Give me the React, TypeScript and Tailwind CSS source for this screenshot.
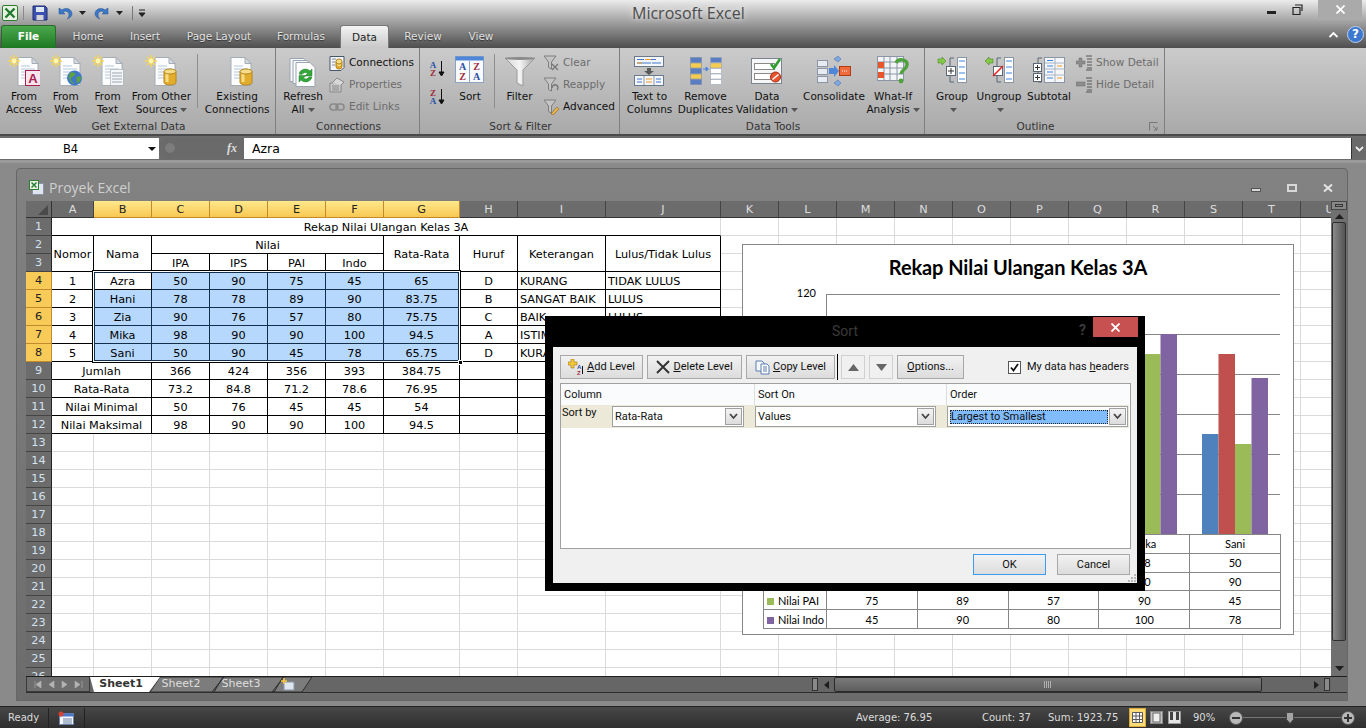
import React from 'react';

const Caret = ({ c = '#555' }: { c?: string }) => (
  <svg width="7" height="4" className="inline-block ml-[3px] align-middle">
    <path d="M0 0h7L3.5 4z" fill={c} />
  </svg>
);

// shared pieces of the ribbon icons
const Page = ({ lines = true }: { lines?: boolean }) => (
  <>
    <path d="M10 2.5h14l6 6v22H10z" fill="#fdfdfd" stroke="#a4acb4" />
    <path d="M24 2.5v6h6z" fill="#d5dbe2" stroke="#a4acb4" />
    {lines && <path d="M13 11h9M13 14h14M13 17h14M13 20h14M13 23h14" stroke="#b4c8dc" />}
  </>
);
const Spark = () => (
  <g>
    <path d="M6 0v12M0 6h12M2 2l8 8M10 2l-8 8" stroke="#f9d648" strokeWidth="1.4" />
    <circle cx="6" cy="6" r="2.4" fill="#fff6b0" />
  </g>
);
const Db = ({ x, y, w = 12, h = 15 }: { x: number; y: number; w?: number; h?: number }) => (
  <g transform={`translate(${x} ${y})`}>
    <path d={`M0 2.5v${h - 4}a${w / 2} 2.5 0 0 0 ${w} 0v-${h - 4}z`} fill="#e2ad2c" stroke="#b4851c" />
    <rect x="1.5" y="3" width="3" height={h - 5} fill="#f7dc84" />
    <ellipse cx={w / 2} cy="2.5" rx={w / 2} ry="2.5" fill="#f6dd8a" stroke="#b4851c" />
  </g>
);
const Ico = ({ children, w = 32, h = 32 }: { children: React.ReactNode; w?: number; h?: number }) => (
  <svg width={w} height={h} viewBox={`0 0 ${w} ${h}`}>
    {children}
  </svg>
);

const FromAccess = () => (
  <Ico>
    <Page />
    <Spark />
    <rect x="17.5" y="15.5" width="15" height="15" fill="#f8e4ec" stroke="#a81e50" />
    <text x="25" y="27.5" textAnchor="middle" fontSize="13" fontWeight="700" fill="#a81e50" fontFamily="Liberation Sans, sans-serif">A</text>
  </Ico>
);
const FromWeb = () => (
  <Ico>
    <Page />
    <Spark />
    <circle cx="24.5" cy="23" r="7.5" fill="#3f78c8" />
    <path d="M20 18c3-2 6 0 5 2s-4 1-4 4 3 3 3 5c-3 0-7-6-4-11zM27 22c2-1 4-1 4 1s-2 4-3 5-2-4-1-6z" fill="#5ea23c" />
  </Ico>
);
const FromText = () => (
  <Ico>
    <Page />
    <Spark />
    <rect x="18.5" y="14.5" width="13" height="16" fill="#f4f6f8" stroke="#8e98a4" strokeDasharray="1 1" />
    <path d="M20 18h10M20 21h10M20 24h10M20 27h10" stroke="#9aa6b2" />
  </Ico>
);
const FromOther = () => (
  <Ico>
    <Page />
    <Spark />
    <Db x={19} y={14} />
  </Ico>
);
const Existing = () => (
  <Ico>
    <Page />
    <Db x={19} y={14} />
  </Ico>
);
const Refresh = () => (
  <Ico>
    <path d="M3 3.5h14l4 4v19H3z" fill="#f6f8fa" stroke="#9aa4b0" />
    <path d="M6 5.5h14l4 4v19H6z" fill="#f8fafc" stroke="#9aa4b0" />
    <path d="M9 7.5h14l5 5v19H9z" fill="#fff" stroke="#9aa4b0" />
    <path d="M12 19a6.5 6.5 0 0 1 11-3l2-2v7h-7l2.500-2.500a3.500 3.500 0 0 0-5.500 1z" fill="#35a83c" stroke="#1f7a28" strokeWidth=".5" />
    <path d="M25 22a6.500 6.500 0 0 1-11 3l-2 2v-6.500h7l-2.500 2.500a3.500 3.500 0 0 0 5.500-1z" fill="#35a83c" stroke="#1f7a28" strokeWidth=".5" />
  </Ico>
);
const ConnIco = () => (
  <Ico w={16} h={16}>
    <path d="M1 1.500h14v11l-3 3H1z" fill="#f4f6fa" stroke="#48566a" />
    <path d="M3 4h4M3 7h3M3 10h3" stroke="#7a8ca0" />
    <Db x={7} y={4} w={6} h={9} />
  </Ico>
);
const PropIco = () => (
  <Ico w={16} h={16}>
    <path d="M1 6h11v9H1z" fill="#c8c8c8" stroke="#888" />
    <path d="M3 6l5-5 7 4-3 3" fill="#d8d8d8" stroke="#888" />
    <path d="M3 9h7M3 11h7M3 13h7" stroke="#8a8a8a" />
  </Ico>
);
const LinkIco = () => (
  <Ico w={16} h={16}>
    <rect x="1" y="5" width="8" height="6" rx="3" fill="none" stroke="#8a8a8a" strokeWidth="1.6" />
    <rect x="7" y="5" width="8" height="6" rx="3" fill="none" stroke="#8a8a8a" strokeWidth="1.6" />
  </Ico>
);
const AzIco = ({ top, bot }: { top: string; bot: string }) => {
  const col = (s: string) => (s === 'A' ? '#2a50a8' : '#a02c3c');
  return (
    <Ico w={18} h={18}>
      <text x="5" y="8" textAnchor="middle" fontSize="9" fontWeight="700" fill={col(top)} fontFamily="Liberation Serif, serif">{top}</text>
      <text x="5" y="16" textAnchor="middle" fontSize="9" fontWeight="700" fill={col(bot)} fontFamily="Liberation Serif, serif">{bot}</text>
      <path d="M13.500 1v14M11 12l2.500 4 2.500-4z" stroke="#111" fill="#111" />
    </Ico>
  );
};
const SortBig = () => (
  <Ico>
    <rect x="1.500" y="1.500" width="28" height="26" fill="#f8fafd" stroke="#8ca2c0" />
    <rect x="1.500" y="1.500" width="28" height="4" fill="#4f86d8" />
    <path d="M15.500 6v21" stroke="#8ca2c0" />
    <g fontSize="10" fontWeight="700" fontFamily="Liberation Serif, serif" textAnchor="middle">
      <text x="8.500" y="15" fill="#2a50a8">A</text>
      <text x="8.500" y="25" fill="#a02c3c">Z</text>
      <text x="22.500" y="15" fill="#a02c3c">Z</text>
      <text x="22.500" y="25" fill="#2a50a8">A</text>
    </g>
  </Ico>
);
const Funnel = () => (
  <Ico>
    <defs>
      <linearGradient id="fun" x1="0" x2="1" y1="0" y2="0">
        <stop offset="0" stopColor="#d8d8d8" />
        <stop offset=".5" stopColor="#f4f4f4" />
        <stop offset="1" stopColor="#a4a4a4" />
      </linearGradient>
    </defs>
    <path d="M1 3h30L19 15v16l-6-3V15z" fill="url(#fun)" stroke="#9a9a9a" />
    <ellipse cx="16" cy="3.500" rx="15" ry="1.500" fill="#8a8a8a" />
  </Ico>
);
const MiniFunnel = ({ children }: { children?: React.ReactNode }) => (
  <Ico w={16} h={16}>
    <path d="M1 1h12L8.500 7v7l-3-1.500V7z" fill="#c4c4c4" stroke="#7e7e7e" />
    {children}
  </Ico>
);
const TextCols = () => (
  <Ico w={32} h={32}>
    <rect x=".5" y="1.500" width="29" height="10" fill="#f4f6fa" stroke="#6a7a8c" />
    <path d="M3 4.500h7M11 4.500h11M3 8h14M18 8h9" stroke="#3f78d0" />
    <path d="M11 4.500h6M3 8h5" stroke="#ef9a20" />
    <path d="M13 13h4v3h3l-5 4-5-4h3z" fill="#5a5a5a" />
    <rect x=".5" y="20.500" width="29" height="10" fill="#f4f6fa" stroke="#6a7a8c" />
    <path d="M10 21v9M20 21v9" stroke="#8a9aac" />
    <path d="M3 24h5M3 27h5M22 24h5M22 27h5" stroke="#3f78d0" />
    <path d="M12 24h6M12 27h6" stroke="#ef9a20" />
  </Ico>
);
const RemoveDup = () => {
  const fills = ['#5a7cc0', '#f6cc50', '#5a7cc0', '#f6cc50', '#5a7cc0'];
  return (
    <Ico>
      {fills.map((f, i) => (
        <rect key={i} x=".5" y={2.500 + i * 5.500} width="11" height="5" fill={f} stroke="#7a8aa8" strokeWidth=".6" />
      ))}
      {['#5a7cc0', '#f6cc50', '#fff', '#fff', '#fff'].map((f, i) => (
        <rect key={i} x="20.500" y={2.500 + i * 5.500} width="11" height="5" fill={f} stroke="#9aa6b8" strokeWidth=".6" />
      ))}
      <path d="M13 14h4M16 12l2.500 2-2.500 2z" stroke="#4f86d8" fill="#4f86d8" />
    </Ico>
  );
};
const Validation = () => (
  <Ico>
    <rect x=".5" y="3.500" width="30" height="25" fill="#f4f6f8" stroke="#7c8490" />
    <rect x="3.500" y="8.500" width="20" height="6" fill="#fff" stroke="#8a8a8a" />
    <rect x="3.500" y="18.500" width="20" height="6" fill="#fff" stroke="#8a8a8a" />
    <path d="M20 9l3 4 6-9" fill="none" stroke="#2f9e2f" strokeWidth="2.600" />
    <circle cx="24.500" cy="22" r="5" fill="#e8542c" stroke="#a82c10" />
    <path d="M21.500 24.500l6-5" stroke="#fff" strokeWidth="1.600" />
  </Ico>
);
const Consol = () => (
  <Ico w={34} h={32}>
    <g fill="#e8ecf2" stroke="#8a96a6">
      <rect x=".5" y="5.500" width="10" height="6" />
      <rect x=".5" y="13.500" width="10" height="6" />
      <rect x=".5" y="21.500" width="10" height="6" />
    </g>
    <path d="M12 13h5v-3l5 6-5 6v-3h-5z" fill="#4f86d8" />
    <rect x="22.500" y="11.500" width="11" height="9" fill="#f06a3c" stroke="#b03c14" />
    <path d="M25 16h6" stroke="#fff" strokeDasharray="1 1" />
    <path d="M17 4l4-3 3 3-3 3zM17 28l4-3 3 3-3 3z" fill="#7fa8e0" stroke="#4f76b0" strokeWidth=".6" />
  </Ico>
);
const WhatIf = () => (
  <Ico>
    <g stroke="#8a96a6" fill="#f2f4f8">
      <rect x=".5" y="1.500" width="26" height="24" />
    </g>
    <path d="M7 2v24M13 2v24M20 2v24M1 7h26M1 13h26M1 19h26" stroke="#8a96a6" />
    <rect x="1" y="7" width="6" height="6" fill="#e8542c" />
    <rect x="1" y="17" width="6" height="6" fill="#e8542c" />
    <path d="M19 8c2-5 12-4 11 2 0 4-6 5-6 9" fill="none" stroke="#4ea23c" strokeWidth="3.400" />
    <circle cx="24" cy="26" r="2.400" fill="#4ea23c" />
  </Ico>
);
const OutlineBars = ({ x }: { x: number }) => (
  <g>
    <rect x={x + .5} y=".5" width="9" height="25" fill="#fff" stroke="#8a96a6" />
    <path d={`M${x + 2} 4h6M${x + 2} 10h6M${x + 2} 16h6M${x + 2} 22h6`} stroke="#3f86e0" />
  </g>
);
const GroupIco = () => (
  <Ico w={30} h={28}>
    <OutlineBars x={20} />
    <path d="M17 1h-4v24h4" fill="none" stroke="#5a6674" />
    <rect x="9.500" y="9.500" width="9" height="9" fill="#fff" stroke="#5a6674" />
    <path d="M11 14h6M14 11v6" stroke="#333" />
    <path d="M1 2h4V0l4 4-4 4V6H1z" fill="#86c84a" stroke="#4a8a24" strokeWidth=".6" />
  </Ico>
);
const UngroupIco = () => (
  <Ico w={30} h={28}>
    <OutlineBars x={20} />
    <path d="M17 1h-4v24h4" fill="none" stroke="#5a6674" />
    <rect x="9.500" y="9.500" width="9" height="9" fill="#fff" stroke="#5a6674" />
    <path d="M9 19L19 9" stroke="#e82020" strokeWidth="1.600" />
    <path d="M9 2H5V0L1 4l4 4V6h4z" fill="#86c84a" stroke="#4a8a24" strokeWidth=".6" />
  </Ico>
);
const SubtotalIco = () => (
  <Ico w={32} h={28}>
    <rect x="11.500" y=".5" width="20" height="25" fill="#f4f6fa" stroke="#8a96a6" />
    <path d="M22 1v24M12 6h20M12 12h20M12 18h20" stroke="#a8b4c4" />
    <path d="M14 3.500h6M14 9h6M14 15h6M14 21h6" stroke="#3f86e0" />
    <path d="M24 9h5M24 21h5" stroke="#f09a20" />
    <path d="M9 1H5v24h4" fill="none" stroke="#5a6674" />
    <g fill="#fff" stroke="#5a6674">
      <rect x=".5" y="6.500" width="8" height="8" />
      <rect x=".5" y="16.500" width="8" height="8" />
    </g>
    <path d="M2 10.500h5M4.500 8v5M2 20.500h5M4.500 18v5" stroke="#333" />
  </Ico>
);
const DetailIco = ({ plus }: { plus?: boolean }) => (
  <Ico w={16} h={16}>
    <path d="M10 1h6M11 4h5M11 7h5M11 10h5M11 13h5M10 15h6" stroke="#555" />
    {plus ? <path d="M3 3h3v3h3v3H6v3H3V9H0V6h3z" fill="#8c8c8c" stroke="#6e6e6e" strokeWidth=".5" /> : <rect x="0" y="5" width="9" height="4" fill="#8c8c8c" stroke="#6e6e6e" strokeWidth=".5" />}
  </Ico>
);

const BigBtn = ({ className, icon, lines, caret }: { className: string; icon: React.ReactNode; lines: string[]; caret?: boolean }) => (
  <div className={`${className} flex flex-col items-center pt-[6px]`}>
    <div className="h-[33px] flex items-center justify-center">{icon}</div>
    <div className="mt-[3px] text-center leading-[13px] whitespace-nowrap">
      {lines.map((l, i) => (
        <div key={i} className="h-[13px]">
          {l}
          {caret && i === lines.length - 1 && <Caret />}
        </div>
      ))}
    </div>
  </div>
);

const SmallBtn = ({ icon, label, dim }: { icon: React.ReactNode; label: string; dim?: boolean }) => (
  <div className={`h-[22px] flex items-center gap-[4px] whitespace-nowrap ${dim ? 'text-[#6c6c6c]' : 'text-[#111]'}`}>
    {icon}
    <span>{label}</span>
  </div>
);

const Group = ({ className, label, children, launcher }: { className: string; label: string; children: React.ReactNode; launcher?: boolean }) => (
  <div className={`${className} relative flex flex-col border-r border-r-[#7e7e7e] h-[86px] shrink-0`}>
    <div className="flex h-[70px]">{children}</div>
    <div className={`h-[16px] leading-[16px] text-center text-[#333] ${launcher ? 'pr-[18px]' : 'pl-[2px]'}`}>{label}</div>
    {launcher && (
      <svg width="9" height="9" className="absolute right-[6px] bottom-[3px]">
        <path d="M.5.5h8M.5.5v8M4 4l4 4M8 5v3H5" fill="none" stroke="#777" />
      </svg>
    )}
  </div>
);

const Vsep = ({ className }: { className: string }) => <div className={`${className} w-[1px] bg-[#8e8e8e] h-[54px] mt-[6px] shrink-0`} />;

const TitleBar = () => (
  <div className="h-[25px] relative flex items-center">
    <div className="flex items-center pl-[1px] gap-[3px]">
      <svg width="16" height="16" className="ml-[1px]">
        <rect x=".5" y=".5" width="15" height="15" rx="1.500" fill="#e8f2e4" stroke="#2e7d32" />
        <path d="M3.500 3.500l9 9M12.500 3.500l-9 9" stroke="#1f7a2e" strokeWidth="2.400" />
      </svg>
      <div className="w-[1px] h-[14px] bg-[#8a8a8a] ml-[2px] mr-[5px]" />
      <svg width="16" height="16">
        <path d="M1 1h12l2 2v12H1z" fill="#3c50b0" stroke="#1e2a70" />
        <rect x="4" y="2" width="8" height="5" fill="#dfe6f4" />
        <rect x="4.500" y="10" width="7" height="5" fill="#d4d4d4" />
      </svg>
      <svg width="16" height="16" className="ml-[6px]">
        <path d="M2 3v6h6L6 7c3-2 6 0 6 3 0 2-1 3-2 4 3-1 5-3 5-5 0-5-6-7-10-4z" fill="#3c78c8" stroke="#24508c" strokeWidth=".5" />
      </svg>
      <Caret c="#222" />
      <svg width="16" height="16" className="ml-[5px]">
        <path d="M14 3v6H8l2-2C7 5 4 7 4 10c0 2 1 3 2 4-3-1-5-3-5-5 0-5 6-7 10-4z" fill="#3c78c8" stroke="#24508c" strokeWidth=".5" />
      </svg>
      <Caret c="#222" />
      <div className="w-[1px] h-[14px] bg-[#777] ml-[6px]" />
      <svg width="8" height="8" className="ml-[2px]">
        <path d="M1 1h6M1 4h6L4 7.500z" stroke="#222" fill="#222" />
      </svg>
    </div>
    <div className="absolute left-[632px] top-[4px] text-[16px] leading-[18px] text-[#4c4c4c] font-['Open_Sans',sans-serif] [text-shadow:0_0_6px_#ffffff]">Microsoft Excel</div>
    <div className="absolute right-[4px] top-0 flex items-center h-[18px]">
      <svg width="9" height="3" className="mr-[16px] mt-[6px]">
        <rect width="9" height="3" fill="#222" />
      </svg>
      <svg width="11" height="11" className="mr-[15px]">
        <path d="M3 1h7v6M1 3.500h7v7H1z" fill="none" stroke="#222" strokeWidth="1.200" />
      </svg>
      <div className="w-[44px] h-[18px] bg-[#aaaaaa] flex items-center justify-center">
        <svg width="9" height="9">
          <path d="M.5.5l8 8M8.500.5l-8 8" stroke="#fff" strokeWidth="1.800" />
        </svg>
      </div>
    </div>
  </div>
);

const tabNames = [
  ['Home', 'w-[64px]'],
  ['Insert', 'w-[50px]'],
  ['Page Layout', 'w-[98px]'],
  ['Formulas', 'w-[72px] pr-[6px]'],
];

const Tabs = () => (
  <div className="h-[23px] flex items-stretch relative">
    <div className="ml-[1px] w-[55px] rounded-t-[3px] bg-linear-to-b from-[#4aa84c] to-[#1c7a22] border border-b-0 border-[#2a6a2c] text-white font-bold flex items-center justify-center text-[10.5px]">
      File
    </div>
    {tabNames.map(([n, w]) => (
      <div key={n} className={`${w} pt-[1px] flex items-center justify-center text-[#e2e2e2] [text-shadow:0_1px_1px_#333333]`}>{n}</div>
    ))}
    <div className="w-[49px] pt-[1px] rounded-t-[3px] bg-linear-to-b from-[#f4f4f4] to-[#c8c8c8] border border-b-0 border-[#777] text-[#222] flex items-center justify-center">Data</div>
    <div className="w-[68px] pt-[1px] flex items-center justify-center text-[#e2e2e2] [text-shadow:0_1px_1px_#333333]">Review</div>
    <div className="w-[48px] pt-[1px] flex items-center justify-center text-[#e2e2e2] [text-shadow:0_1px_1px_#333333]">View</div>
    <div className="absolute right-[2px] top-[1px] flex items-center gap-[9px]">
      <svg width="9" height="6">
        <path d="M.5 5l4-4 4 4" fill="none" stroke="#fff" strokeWidth="1.800" />
      </svg>
      <div className="w-[17px] h-[17px] rounded-full bg-[#3c78d0] border border-[#bcd0ee] text-white font-bold text-[12px] leading-[15px] text-center">?</div>
    </div>
  </div>
);

const Ribbon = () => (
  <div className="h-[86px] flex bg-linear-to-b from-[#cbcbcb] to-[#a9a9a9] text-[#111]">
    <Group className="w-[276px]" label="Get External Data">
      <BigBtn className="w-[42px] ml-[3px]" icon={<FromAccess />} lines={['From', 'Access']} />
      <BigBtn className="w-[42px]" icon={<FromWeb />} lines={['From', 'Web']} />
      <BigBtn className="w-[42px]" icon={<FromText />} lines={['From', 'Text']} />
      <BigBtn className="w-[66px]" icon={<FromOther />} lines={['From Other', 'Sources']} caret />
      <Vsep className="ml-[3px]" />
      <BigBtn className="w-[76px] ml-[1px]" icon={<Existing />} lines={['Existing', 'Connections']} />
    </Group>
    <Group className="w-[144px]" label="Connections">
      <BigBtn className="w-[52px] ml-[1px]" icon={<Refresh />} lines={['Refresh', 'All']} caret />
      <div className="pt-[4px]">
        <SmallBtn icon={<ConnIco />} label="Connections" />
        <SmallBtn icon={<PropIco />} label="Properties" dim />
        <SmallBtn icon={<LinkIco />} label="Edit Links" dim />
      </div>
    </Group>
    <Group className="w-[200px]" label="Sort & Filter">
      <div className="pt-[12px] pl-[8px] w-[31px] flex flex-col gap-[10px]">
        <AzIco top="A" bot="Z" />
        <AzIco top="Z" bot="A" />
      </div>
      <BigBtn className="w-[40px] -ml-[1px]" icon={<SortBig />} lines={['Sort']} />
      <Vsep className="ml-[4px]" />
      <BigBtn className="w-[49px]" icon={<Funnel />} lines={['Filter']} />
      <div className="pt-[4px] -ml-[1px]">
        <SmallBtn dim label="Clear" icon={<MiniFunnel><path d="M9 9l6 6M15 9l-6 6" stroke="#777" strokeWidth="1.400" /></MiniFunnel>} />
        <SmallBtn dim label="Reapply" icon={<MiniFunnel><path d="M9 11a3 3 0 1 1 5 2" fill="none" stroke="#777" strokeWidth="1.400" /></MiniFunnel>} />
        <SmallBtn label="Advanced" icon={<MiniFunnel><path d="M8 15l6-7 2 2-6 6z" fill="#f0b84a" stroke="#7a5a20" strokeWidth=".6" /></MiniFunnel>} />
      </div>
    </Group>
    <Group className="w-[305px]" label="Data Tools">
      <BigBtn className="w-[57px] ml-[1px]" icon={<TextCols />} lines={['Text to', 'Columns']} />
      <BigBtn className="w-[55px]" icon={<RemoveDup />} lines={['Remove', 'Duplicates']} />
      <BigBtn className="w-[68px]" icon={<Validation />} lines={['Data', 'Validation']} caret />
      <BigBtn className="w-[66px]" icon={<Consol />} lines={['Consolidate']} />
      <BigBtn className="w-[52px]" icon={<WhatIf />} lines={['What-If', 'Analysis']} caret />
    </Group>
    <Group className="w-[240px]" label="Outline" launcher>
      <BigBtn className="w-[50px] ml-[2px]" icon={<GroupIco />} lines={['Group', '']} caret />
      <BigBtn className="w-[44px]" icon={<UngroupIco />} lines={['Ungroup', '']} caret />
      <BigBtn className="w-[56px]" icon={<SubtotalIco />} lines={['Subtotal']} />
      <div className="pt-[4px] -ml-[1px]">
        <SmallBtn dim icon={<DetailIco plus />} label="Show Detail" />
        <SmallBtn dim icon={<DetailIco />} label="Hide Detail" />
      </div>
    </Group>
  </div>
);

const FormulaBar = () => (
  <div className="h-[29px] bg-[#6c6c6c] pt-[2px] border-t-[2px] border-t-[#4a4a4a] border-b-[3px] border-b-[#9a9a9a]">
    <div className="h-[21px] flex items-stretch">
      <div className="w-[159px] bg-white relative text-center pr-[18px] leading-[22px] text-[11.5px] text-black">
        B4
        <svg width="8" height="4" className="absolute right-[3px] top-[9px]">
          <path d="M0 0h8L4 4z" fill="#111" />
        </svg>
      </div>
      <div className="w-[85px] bg-[#6a6a6a] rounded-l-[10px] relative">
        <div className="absolute left-[6px] top-[5px] w-[10px] h-[10px] rounded-full bg-[#7c7c7c]" />
        <span className="absolute right-[7px] top-[1px] italic font-bold text-[#ddd] font-['Liberation_Serif',serif] text-[12px]">fx</span>
      </div>
      <div className="flex-1 bg-white pl-[8px] leading-[22px] text-[12.5px] text-black">Azra</div>
      <div className="w-[15px] bg-[#6a6a6a] border-l border-[#333] flex items-center justify-center">
        <svg width="9" height="6">
          <path d="M1 1l3.500 3.500L8 1" fill="none" stroke="#eee" strokeWidth="1.800" />
        </svg>
      </div>
    </div>
  </div>
);

const colNames = ['A', 'B', 'C', 'D', 'E', 'F', 'G', 'H', 'I', 'J', 'K', 'L', 'M', 'N', 'O', 'P', 'Q', 'R', 'S', 'T', 'U'];

const ColHead = ({ name }: { name: string }) => {
  const sel = 'BCDEFG'.includes(name);
  return sel ? (
    <div className="bg-linear-to-b from-[#ffe88c] to-[#f8c850] border-r border-r-[#c28a2c] border-b border-b-[#c28a2c] text-[#222] text-center leading-[17px]">{name}</div>
  ) : (
    <div className="bg-[#6c6c6c] border-r border-r-[#444] border-b border-b-[#333] text-[#dedede] text-center leading-[17px]">{name}</div>
  );
};

const RowHead = ({ n }: { n: number }) => {
  const sel = n >= 4 && n <= 8;
  return sel ? (
    <div className="bg-[#f8ca58] border-r border-r-[#c28a2c] border-b border-b-[#c28a2c] text-[#222] text-center leading-[18px]">{n}</div>
  ) : (
    <div className="bg-[#6c6c6c] border-r border-r-[#222] border-b border-b-[#444] text-[#d4e2f0] text-center leading-[18px]">{n}</div>
  );
};

const Blank = () => <div className="border-r border-b border-[#dadada] bg-white" />;
const Blanks = ({ n }: { n: number }) => (
  <>
    {Array.from({ length: n }).map((_, i) => (
      <Blank key={i} />
    ))}
  </>
);

const Cell = ({ children, className = '' }: { children?: React.ReactNode; className?: string }) => (
  <div className={`border-r border-b border-black bg-white text-center leading-[19px] whitespace-nowrap overflow-hidden ${className}`}>{children}</div>
);
const Sel = ({ children }: { children: React.ReactNode }) => (
  <div className="border-r border-b border-[#12304e] bg-[#b6d8fd] text-center leading-[19px]">{children}</div>
);

const body = [
  ['1', 'Azra', '50', '90', '75', '45', '65', 'D', 'KURANG', 'TIDAK LULUS'],
  ['2', 'Hani', '78', '78', '89', '90', '83.75', 'B', 'SANGAT BAIK', 'LULUS'],
  ['3', 'Zia', '90', '76', '57', '80', '75.75', 'C', 'BAIK', 'LULUS'],
  ['4', 'Mika', '98', '90', '90', '100', '94.5', 'A', 'ISTIMEWA', 'LULUS'],
  ['5', 'Sani', '50', '90', '45', '78', '65.75', 'D', 'KURANG', 'TIDAK LULUS'],
];
const summary = [
  ['Jumlah', '366', '424', '356', '393', '384.75'],
  ['Rata-Rata', '73.2', '84.8', '71.2', '78.6', '76.95'],
  ['Nilai Minimal', '50', '76', '45', '45', '54'],
  ['Nilai Maksimal', '98', '90', '90', '100', '94.5'],
];

const cats = ['Azra', 'Hani', 'Zia', 'Mika', 'Sani'];
const series = [
  { name: 'Nilai IPA', swatch: 'bg-[#4f81bd]', color: '#4f81bd', values: [50, 78, 90, 98, 50] },
  { name: 'Nilai IPS', swatch: 'bg-[#c0504d]', color: '#c0504d', values: [90, 78, 76, 90, 90] },
  { name: 'Nilai PAI', swatch: 'bg-[#9bbb59]', color: '#9bbb59', values: [75, 89, 57, 90, 45] },
  { name: 'Nilai Indo', swatch: 'bg-[#8064a2]', color: '#8064a2', values: [45, 90, 80, 100, 78] },
];
const catLeft = [83.5, 174.7, 266, 356, 447];

const Chart = () => (
  <div className="absolute left-[716px] top-[43px] w-[552px] h-[391px] bg-white border border-[#868686] font-['Lato',sans-serif] text-black">
    <div className="h-[39px] pt-[8px] text-center text-[20px] leading-[28px] font-bold tracking-[-0.1px]">Rekap Nilai Ulangan Kelas 3A</div>
    <svg width="550" height="250" className="block">
      {[120, 100, 80, 60, 40, 20, 0].map((v, i) => (
        <g key={v}>
          <path d={`M83 ${10.5 + i * 40}H537`} stroke="#868686" />
          <text x="73" y={13 + i * 40} textAnchor="end" fontSize="11" fill="#000">{v}</text>
        </g>
      ))}
      <path d="M83.500 10v240" stroke="#868686" />
      {cats.map((c, ci) =>
        series.map((s, si) => (
          <rect key={c + s.name} x={catLeft[ci] + 12 + si * 16.5} y={250 - s.values[ci] * 2} width="16.500" height={s.values[ci] * 2} fill={s.color} />
        ))
      )}
    </svg>
    <table className="ml-[20px] border-collapse table-fixed w-[518px] text-[11px] leading-[15px]">
      <tbody>
        <tr className="h-[18.8px]">
          <td className="w-[63px] p-0" />
          {cats.map(c => (
            <td key={c} className="border border-[#868686] text-center p-0">{c}</td>
          ))}
        </tr>
        {series.map(s => (
          <tr key={s.name} className="h-[18.8px]">
            <td className="border border-[#868686] p-0 pl-[3px] whitespace-nowrap">
              <span className={`${s.swatch} inline-block w-[7px] h-[7px] mr-[4px]`} />
              {s.name}
            </td>
            {s.values.map((v, i) => (
              <td key={i} className="border border-[#868686] text-center p-0">{v}</td>
            ))}
          </tr>
        ))}
      </tbody>
    </table>
  </div>
);

const SheetGrid = () => (
  <div className="relative w-[1305px] h-[475px] overflow-hidden grid grid-cols-[26px_42px_repeat(5,58px)_76px_58px_88px_115px_repeat(11,58px)] grid-rows-[17px_repeat(26,18px)] text-[11.25px] text-black">
    <div className="bg-[#6c6c6c] border-r border-b border-[#333] relative">
      <svg width="10" height="10" className="absolute right-[3px] bottom-[2px]">
        <path d="M10 0v10H0z" fill="#4a4a4a" />
      </svg>
    </div>
    {colNames.map(c => (
      <ColHead key={c} name={c} />
    ))}

    <RowHead n={1} />
    <Cell className="col-span-10 border-r-[#dadada]">Rekap Nilai Ulangan Kelas 3A</Cell>
    <Blanks n={11} />

    <RowHead n={2} />
    <Cell className="row-span-2 leading-[37px]">Nomor</Cell>
    <Cell className="row-span-2 leading-[37px]">Nama</Cell>
    <Cell className="col-span-4">Nilai</Cell>
    <Cell className="row-span-2 leading-[37px]">Rata-Rata</Cell>
    <Cell className="row-span-2 leading-[37px]">Huruf</Cell>
    <Cell className="row-span-2 leading-[37px]">Keterangan</Cell>
    <Cell className="row-span-2 leading-[37px]">Lulus/Tidak Lulus</Cell>
    <Blanks n={11} />

    <RowHead n={3} />
    {['IPA', 'IPS', 'PAI', 'Indo'].map(h => (
      <Cell key={h}>{h}</Cell>
    ))}
    <Blanks n={11} />

    {body.map((r, i) => (
      <React.Fragment key={r[0]}>
        <RowHead n={i + 4} />
        <Cell>{r[0]}</Cell>
        {i === 0 ? <Cell>{r[1]}</Cell> : <Sel>{r[1]}</Sel>}
        {r.slice(2, 7).map((v, j) => (
          <Sel key={j}>{v}</Sel>
        ))}
        <Cell>{r[7]}</Cell>
        <Cell className="text-left pl-[2px]">{r[8]}</Cell>
        <Cell className="text-left pl-[2px]">{r[9]}</Cell>
        <Blanks n={11} />
      </React.Fragment>
    ))}

    {summary.map((r, i) => (
      <React.Fragment key={r[0]}>
        <RowHead n={i + 9} />
        <Cell className="col-span-2">{r[0]}</Cell>
        {r.slice(1).map((v, j) => (
          <Cell key={j}>{v}</Cell>
        ))}
        <Cell />
        <Cell />
        <Cell />
        <Blanks n={11} />
      </React.Fragment>
    ))}

    {Array.from({ length: 14 }).map((_, i) => (
      <React.Fragment key={i}>
        <RowHead n={i + 13} />
        <Blanks n={21} />
      </React.Fragment>
    ))}

    {/* selection frame */}
    <div className="absolute left-[66px] top-[69px] w-[369px] h-[93px] border border-black pointer-events-none">
      <div className="w-full h-full border border-white">
        <div className="w-full h-full border border-[#12304e]" />
      </div>
      <div className="absolute -right-[3px] -bottom-[3px] w-[5px] h-[5px] bg-black border border-white" />
    </div>
    <Chart />
  </div>
);

const ScrollArrow = ({ d }: { d: string }) => (
  <svg width="9" height="9">
    <path d={d} fill="#1e1e1e" />
  </svg>
);

const VScroll = () => (
  <div className="w-[16px] h-[475px] flex flex-col bg-[#707070]">
    <div className="h-[9px] bg-[#888] border border-[#444] flex items-center justify-center">
      <div className="w-[8px] h-[3px] border border-[#333]" />
    </div>
    <div className="h-[12px] flex items-center justify-center">
      <ScrollArrow d="M4.500 2L9 7H0z" />
    </div>
    <div className="h-[419px] mx-[1px] rounded-[2px] border border-[#2e2e2e] bg-linear-to-r from-[#8a8a8a] via-[#6e6e6e] to-[#555]" />
    <div className="flex-1" />
    <div className="h-[16px] flex items-center justify-center">
      <ScrollArrow d="M0 2h9L4.500 7z" />
    </div>
  </div>
);

const SheetTabs = () => (
  <div className="h-[17px] flex relative bg-[#666] border-t border-t-[#1e1e1e] border-b border-b-[#2e2e2e]">
    <div className="w-[64px] flex items-center justify-around px-[4px] bg-[#6e6e6e] border border-t-0 border-[#3a3a3a]">
      {['M3 2v7M9 2L4 5.500 9 9z', 'M8 2L3 5.500 8 9z', 'M3 2l5 3.500L3 9z', 'M2 2l5 3.500L2 9zM9 2v7'].map(d => (
        <svg key={d} width="11" height="11">
          <path d={d} fill="#b4b4b4" stroke="#b4b4b4" strokeWidth=".6" />
        </svg>
      ))}
    </div>
    <div className="relative w-[222px] flex items-center">
      <svg width="222" height="15" className="absolute left-0 top-0">
        <path d="M222 0h-28l-12 15h30zM193 0h-60l-9 15h60zM134 0H70l-10 15h62z" fill="#7c7c7c" stroke="#2e2e2e" />
        <path d="M0 0h70l-11 15H4z" fill="#fff" />
      </svg>
      <span className="relative w-[60px] ml-[1px] text-center font-bold text-[#333] text-[11px]">Sheet1</span>
      <span className="relative w-[60px] text-center text-[#dedede] text-[11px]">Sheet2</span>
      <span className="relative w-[60px] text-center text-[#dedede] text-[11px]">Sheet3</span>
      <svg width="14" height="13" className="relative ml-[10px]">
        <rect x="3" y="4" width="10" height="8" fill="#dfe6f0" stroke="#8a96a6" />
        <path d="M3 0v6M0 3h6" stroke="#f8c840" strokeWidth="1.600" />
      </svg>
    </div>
    <div className="ml-auto flex items-center w-[535px]">
      <div className="w-[6px] h-[13px] bg-[#8a8a8a] border border-[#333]" />
      <div className="w-[16px] flex justify-center"><ScrollArrow d="M7 1v8L2 5z" /></div>
      <div className="w-[428px] h-[15px] rounded-[2px] border border-[#2a2a2a] bg-linear-to-b from-[#7a7a7a] to-[#5e5e5e] flex items-center justify-center">
        <svg width="8" height="7">
          <path d="M.5 0v7M2.500 0v7M4.500 0v7M6.500 0v7" stroke="#b0b0b0" />
        </svg>
      </div>
      <div className="flex-1 flex justify-end pr-[3px]"><ScrollArrow d="M2 1v8l5-4z" /></div>
      <div className="w-[6px] h-[13px] bg-[#8a8a8a] border border-[#333] mr-[1px]" />
      <div className="w-[16px] h-[15px] bg-[#6a6a6a]" />
    </div>
  </div>
);

const MdiWindow = () => (
  <div className="ml-[16px] mt-[5px] w-[1332px] h-[533px] rounded-t-[4px] border border-[#666] bg-linear-to-b from-[#828282] to-[#6c6c6c] pl-[9px]">
    <div className="h-[32px] flex items-center relative">
      <svg width="15" height="15" className="ml-[3px] mt-[4px]">
        <rect x="3.500" y="3.500" width="11" height="11" fill="#dfe6f0" stroke="#8a96a6" />
        <rect x=".5" y=".5" width="9" height="9" fill="#e8f2e4" stroke="#2e7d32" />
        <path d="M2.500 2.500l5 5M7.500 2.500l-5 5" stroke="#1f7a2e" strokeWidth="1.400" />
      </svg>
      <span className="ml-[5px] mt-[4px] text-[14px] text-[#cfcfcf] font-['Open_Sans',sans-serif]">Proyek Excel</span>
      <div className="absolute right-[14px] top-[15px] flex items-end">
        <div className="w-[10px] h-[4px] bg-[#d8d8d8] border border-[#555]" />
        <div className="w-[10px] h-[8px] ml-[26px] border-[2px] border-[#d8d8d8]" />
        <svg width="10" height="8" className="ml-[26px]">
          <path d="M1 .5l8 7M9 .5l-8 7" stroke="#e4e4e4" strokeWidth="2" />
        </svg>
      </div>
    </div>
    <div className="flex w-[1321px]">
      <SheetGrid />
      <VScroll />
    </div>
    <SheetTabs />
  </div>
);

const StatusBar = () => (
  <div className="h-[22px] flex items-center bg-linear-to-b from-[#474747] to-[#2f2f2f] border-t border-t-[#222] text-[#dcdcdc] text-[10px]">
    <span className="ml-[8px] w-[40px]">Ready</span>
    <div className="w-[1px] h-[20px] bg-[#222]" />
    <svg width="16" height="14" className="ml-[9px]">
      <rect x="1.500" y="2.500" width="14" height="11" fill="#f4f6fa" stroke="#6a80a4" />
      <rect x="1.500" y="2.500" width="14" height="3" fill="#4a78c8" />
      <path d="M5 8h9M5 10h9M5 12h9" stroke="#6a80a4" />
      <circle cx="3" cy="3" r="2.500" fill="#d84030" />
    </svg>
    <div className="w-[1px] h-[20px] bg-[#222] ml-[10px]" />
    <span className="ml-[771px] w-[126px] whitespace-nowrap">Average: 76.95</span>
    <span className="w-[66px] whitespace-nowrap">Count: 37</span>
    <span className="w-[81px] whitespace-nowrap">Sum: 1923.75</span>
    <div className="w-[17px] h-[19px] bg-[#fbdc78] border border-[#d8a838] flex items-center justify-center">
      <svg width="11" height="11">
        <path d="M.5.5h10v10H.5zM4 1v10M7.500 1v10M1 4h10M1 7.500h10" fill="#fff" stroke="#5a5a5a" />
      </svg>
    </div>
    <svg width="13" height="13" className="ml-[4px]">
      <rect x=".5" y=".5" width="12" height="12" fill="#c4c4c4" stroke="#888" />
      <rect x="3" y="2" width="7" height="9" fill="#eee" stroke="#666" />
    </svg>
    <svg width="13" height="13" className="ml-[5px]">
      <rect x=".5" y=".5" width="12" height="12" fill="#e4e4e4" stroke="#999" />
      <path d="M2 1h3v8H2zM8 1h3v8H8z" fill="#444" />
    </svg>
    <span className="ml-[12px] w-[36px]">90%</span>
    <div className="w-[14px] h-[14px] rounded-full bg-[#b8b8b8] border border-[#555] flex items-center justify-center">
      <div className="w-[8px] h-[2px] bg-[#333]" />
    </div>
    <div className="relative w-[98px] h-[1px] bg-[#777]">
      <svg width="8" height="12" className="absolute left-[43px] -top-[5px]">
        <path d="M.5.500h7v7L4 11.500.5 7.500z" fill="#a4a4a4" stroke="#444" />
      </svg>
    </div>
    <div className="w-[14px] h-[14px] rounded-full bg-[#b8b8b8] border border-[#555] flex items-center justify-center relative">
      <div className="w-[8px] h-[2px] bg-[#333]" />
      <div className="absolute w-[2px] h-[8px] bg-[#333]" />
    </div>
  </div>
);

const DlgBtn = ({ className, children }: { className: string; children: React.ReactNode }) => (
  <div className={`${className} h-[24px] border border-[#a8a8a8] bg-linear-to-b from-[#f2f2f2] to-[#dcdcdc] flex items-center justify-center gap-[3px] text-[#111] whitespace-nowrap shrink-0`}>
    {children}
  </div>
);

const SelectBox = ({ className, value, active }: { className: string; value: string; active?: boolean }) => (
  <div className={`${className} h-[21px] bg-white border border-[#a0a0a0] flex items-center shrink-0`}>
    {active ? (
      <div className="ml-[2px] flex-1 h-[14px] bg-[#80bcff] border border-dotted border-[#222] leading-[12px]">{value}</div>
    ) : (
      <div className="ml-[2px] flex-1 leading-[15px]">{value}</div>
    )}
    <div className="w-[17px] h-[17px] mx-[1px] border border-[#a0a0a0] bg-linear-to-b from-[#f4f4f4] to-[#dcdcdc] flex items-center justify-center">
      <svg width="9" height="7">
        <path d="M1 1l3.500 4L8 1" fill="none" stroke="#444" strokeWidth="1.800" />
      </svg>
    </div>
  </div>
);

const SortDialog = () => (
  <div className="absolute left-[545px] top-[316px] w-[600px] h-[275px] bg-black px-[8px] font-['Roboto',sans-serif] text-[11px] text-[#111]">
    <div className="h-[31px] relative text-center text-[14px] leading-[30px] text-[#3a3a3a]">
      Sort
      <span className="absolute left-[526px] top-[-1px] text-[#3a3a3a] font-bold">?</span>
      <div className="absolute right-[-1px] top-[1px] w-[45px] h-[20px] bg-[#c75050] flex items-center justify-center">
        <svg width="9" height="9">
          <path d="M.5.5l8 8M8.500.5l-8 8" stroke="#fff" strokeWidth="1.800" />
        </svg>
      </div>
    </div>
    <div className="h-[236px] bg-[#f0f0f0] pl-[7px] pt-[8px] relative">
      <div className="flex items-center h-[24px]">
        <DlgBtn className="w-[83px]">
          <svg width="16" height="16">
            <path d="M3 0h3v3h3v3H6v3H3V6H0V3h3z" fill="#f2c83a" stroke="#9a7a10" strokeWidth=".6" />
            <text x="9" y="10" fontSize="6" fontWeight="700" fill="#2a50a8" fontFamily="Liberation Sans, sans-serif">A</text>
            <text x="9" y="16" fontSize="6" fontWeight="700" fill="#a02c3c" fontFamily="Liberation Sans, sans-serif">Z</text>
            <path d="M14.500 7v8" stroke="#111" />
          </svg>
          <span><u>A</u>dd Level</span>
        </DlgBtn>
        <DlgBtn className="w-[95px] ml-[4px]">
          <svg width="14" height="14">
            <path d="M1 1l12 12M13 1L1 13" stroke="#333" strokeWidth="2" />
          </svg>
          <span><u>D</u>elete Level</span>
        </DlgBtn>
        <DlgBtn className="w-[89px] ml-[4px]">
          <svg width="15" height="15">
            <path d="M1 1h6l2 2v8H1z" fill="#f4f8fc" stroke="#5a7cb0" />
            <path d="M6 4h6l2 2v8H6z" fill="#fff" stroke="#5a7cb0" />
            <path d="M8 7h4M8 9h4M8 11h4" stroke="#5a7cb0" />
          </svg>
          <span><u>C</u>opy Level</span>
        </DlgBtn>
        <div className="w-[1px] h-[26px] bg-black ml-[2px]" />
        <div className="w-[24px] h-[24px] ml-[3px] border border-[#d0d0d0] flex items-center justify-center">
          <svg width="11" height="7"><path d="M5.500 0L11 7H0z" fill="#666" /></svg>
        </div>
        <div className="w-[24px] h-[24px] ml-[4px] border border-[#d0d0d0] flex items-center justify-center">
          <svg width="11" height="7"><path d="M0 0h11L5.500 7z" fill="#666" /></svg>
        </div>
        <DlgBtn className="w-[67px] ml-[4px]">
          <span><u>O</u>ptions...</span>
        </DlgBtn>
        <div className="ml-[44px] w-[13px] h-[13px] bg-white border border-[#555] flex items-center justify-center">
          <svg width="9" height="9"><path d="M1 4.500l2.500 3L8 1" fill="none" stroke="#111" strokeWidth="1.800" /></svg>
        </div>
        <span className="ml-[6px] whitespace-nowrap">My data has <u>h</u>eaders</span>
      </div>

      <div className="mt-[4px] w-[571px] h-[166px] bg-white border border-[#a0a0a0]">
        <div className="h-[21px] flex bg-[#fafbfc]">
          <div className="w-[193px] pl-[3px] leading-[22px]">Column</div>
          <div className="w-[192px] pl-[3px] leading-[22px] border-l border-[#dddddd]">Sort On</div>
          <div className="pl-[3px] leading-[22px] border-l border-[#dddddd] flex-1">Order</div>
        </div>
        <div className="h-[23px] mr-[1px] bg-[#ece9d8] flex items-center">
          <span className="w-[51px] pl-[1px] self-start leading-[15px] whitespace-nowrap">Sort by</span>
          <SelectBox className="w-[132px]" value="Rata-Rata" />
          <SelectBox className="w-[181px] ml-[11px]" value="Values" />
          <SelectBox className="w-[181px] ml-[11px]" value="Largest to Smallest" active />
        </div>
      </div>

      <div className="flex mt-[5px] h-[21px] pl-[413px]">
        <div className="w-[73px] border border-[#3c9cf4] bg-linear-to-b from-[#f2f2f2] to-[#dcdcdc] text-center leading-[19px]">OK</div>
        <div className="w-[73px] ml-[11px] border border-[#a8a8a8] bg-linear-to-b from-[#f2f2f2] to-[#dcdcdc] text-center leading-[19px]">Cancel</div>
      </div>
      <svg width="9" height="9" className="absolute right-[1px] bottom-[1px]">
        <path d="M7 1h2v2H7zM4 4h2v2H4zM7 4h2v2H7zM1 7h2v2H1zM4 7h2v2H4zM7 7h2v2H7z" fill="#b8b8b8" />
      </svg>
    </div>
  </div>
);

export default function App() {
  return (
    <div className="relative w-[1366px] h-[728px] overflow-hidden bg-[#8a8a8a] font-['DejaVu_Sans',sans-serif] text-[10.5px]">
      <div className="bg-linear-to-b from-[#ececec] via-[#9a9a9a] to-[#4e4e4e]">
        <TitleBar />
        <Tabs />
      </div>
      <Ribbon />
      <FormulaBar />
      <div className="h-[543px] bg-[#8a8a8a] overflow-hidden">
        <MdiWindow />
      </div>
      <StatusBar />
      <SortDialog />
    </div>
  );
}
